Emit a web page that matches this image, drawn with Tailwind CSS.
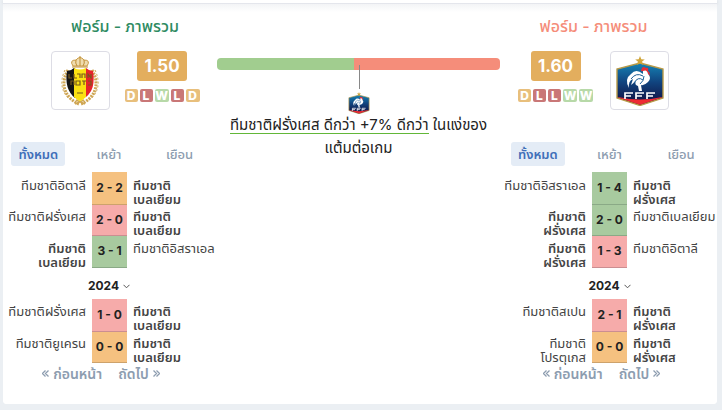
<!DOCTYPE html>
<html lang="th">
  <head>
    <meta charset="UTF-8" />
    <meta name="viewport" content="width=device-width, initial-scale=1.0" />
    <title>ฟอร์ม - ภาพรวม</title>
    <script src="https://cdn.jsdelivr.net/npm/@tailwindcss/browser@4"></script>
  </head>
  <body class="min-h-screen bg-[#ebeff3] pl-[3px] pr-[5px] pb-[6px] flex flex-col font-['Inter','Noto_Sans_Thai',sans-serif] text-[#222]">
    <!-- shared crest of the French team -->
    <svg class="absolute size-0" aria-hidden="true">
      <defs>
        <linearGradient id="blue" x1="0" y1="0" x2="0" y2="1">
          <stop offset="0" stop-color="#1583b5" />
          <stop offset="0.45" stop-color="#11447f" />
          <stop offset="0.85" stop-color="#101a4d" />
        </linearGradient>
        <symbol id="france" viewBox="0 0 48 50">
          <path d="M24 7 L47 13 V42 L24 49.5 L1 42 V13 Z" fill="url(#blue)" stroke="#b89a48" stroke-width="1.4" />
          <path d="M2 41 Q24 46 46 41 V41.5 L24 48.7 L2 41.5 Z" fill="#ee2b33" />
          <path d="M24 0 L25.3 3.2 L28.8 3.4 L26.1 5.6 L27 9 L24 7.1 L21 9 L21.9 5.6 L19.2 3.4 L22.7 3.2 Z" fill="#d0a53a" />
          <path d="M25 15 Q26 9 30 12 Q33 11 32 15 Q35 17 33 20 L31 16 Z" fill="#e62d36" />
          <path d="M27 15 Q31 13 32 18 Q36 22 32 26 Q28 30 25 29 L26 35 L23 35 L22 30 Q18 29 20 25 L15 29 L17 23 Q12 25 13 32 Q8 23 15 18 Q20 12 27 18 Z" fill="#fff" />
          <path d="M15 23 Q20 16 27 20 M18 27 Q22 20 27 24 M28 20 Q28 25 24 28" fill="none" stroke="#1b5d96" stroke-width="1" />
          <path d="M9 43 V37 H17 M9 40 H15 M20 43 V37 H28 M20 40 H26 M31 43 V37 H39 M31 40 H37" fill="none" stroke="#fff" stroke-width="1.7" />
        </symbol>
      </defs>
    </svg>

    <div class="h-[3px] bg-white shadow"></div>
    <main class="flex-1 rounded-b bg-white bg-linear-to-b from-[#f3f4f6] to-white to-[8px] border-t border-[#e4e6ec] pt-3 flex">
      <section class="w-[212px] shrink-0">
        <div class="pl-8">
          <h2 class="text-center text-base leading-5 font-medium text-[#2e8b62]">ฟอร์ม - ภาพรวม</h2>
          <div class="mt-[15px] flex justify-center gap-[15px]">
            <div class="size-[59px] shrink-0 rounded border border-[#dddde5] flex items-center justify-center">
              <svg class="w-10 h-[50px]" viewBox="0 0 40 50" aria-label="เบลเยียม">
                <g fill="none" stroke="#cfa654">
                  <path d="M8 14 Q-1 30 10 42 Q14 46 19 48 M32 14 Q41 30 30 42 Q26 46 21 48" stroke-width="3" stroke-dasharray="2 1" />
                  <path d="M5 14 Q-3 31 9 43 M35 14 Q43 31 31 43" stroke-width="1" stroke-dasharray="2 2" />
                  <path d="M15 48 L24 44 M25 48 L16 44" stroke-width="1.4" />
                </g>
                <path d="M13 10 Q9 4 16 4 Q20 -1 24 4 Q31 4 27 10 Z" fill="#efdcae" stroke="#c99a45" />
                <path d="M20 0 V10 M16 4 Q15 7 17 10 M24 4 Q25 7 23 10 M12 11 H28" stroke="#c08e35" fill="none" />
                <path d="M7 15 Q11 15 14 12 H15 V42 Q4 33 7 15" fill="#151515" />
                <path d="M14 12 Q20 15 26 12 V41 Q23 44 20 45 Q17 44 14 41 Z" fill="#fbe112" />
                <path d="M26 12 Q29 15 33 15 Q36 33 26 41 Z" fill="#e5232b" />
                <path d="M9 18 V22 H12 M14 18 V22 H17 M17 18 H20 V22 M22 22 V18 H25 V22 M28 22 V18 L31 22 V18 M11 29 V25 H14 V29 M16 25 H20 V29 H16 Z M22 25 H26 M24 25 V29 M28 29 H31 V25 H28 M17 37 H23" fill="none" stroke="#77591d" stroke-width="1.2" />
              </svg>
            </div>
            <div class="flex flex-col items-center">
              <span class="w-[50px] h-[30px] rounded-[3px] bg-[#e3ae5e] text-center text-[17px] leading-[30px] font-bold text-white">1.50</span>
              <div class="mt-2 flex gap-[2px] text-xs leading-[13px] font-extrabold text-white text-center">
                <span class="w-[13px] rounded-[2px] bg-[#e8bf7c]">D</span>
                <span class="w-[13px] rounded-[2px] bg-[#c97777]">L</span>
                <span class="w-[14px] rounded-[2px] bg-[#b7d9a8]">W</span>
                <span class="w-[13px] rounded-[2px] bg-[#c97777]">L</span>
                <span class="w-[14px] rounded-[2px] bg-[#e8bf7c]">D</span>
              </div>
            </div>
          </div>
        </div>

        <div class="mt-8 grid grid-cols-3 justify-items-center text-[13px] leading-6 font-medium text-[#8d9db0]">
          <button class="w-[54px] rounded-[3px] bg-[#e4ecf6] font-semibold text-[#3f6fb9]">ทั้งหมด</button>
          <button>เหย้า</button>
          <button>เยือน</button>
        </div>

        <table class="mt-[6px] w-full table-fixed text-[13px] leading-[14px] text-[#444]">
          <colgroup><col class="w-[89px]" /><col class="w-[35px]" /><col /></colgroup>
          <tbody>
            <tr>
              <td class="p-0 pr-[6px] align-top text-right whitespace-nowrap"><div class="h-8 pt-[6px]">ทีมชาติอิตาลี</div></td>
              <td class="p-0 border-b border-[#cda26b] bg-[#f5c180] text-center text-xs font-bold text-[#222]">2 - 2</td>
              <td class="p-0 pl-[6px] align-top font-semibold whitespace-nowrap"><div class="h-8 pt-[6px]">ทีมชาติ<br />เบลเยียม</div></td>
            </tr>
            <tr>
              <td class="p-0 pr-[6px] align-top text-right whitespace-nowrap"><div class="h-[31px] pt-[5px]">ทีมชาติฝรั่งเศส</div></td>
              <td class="p-0 border-b border-[#cb8e91] bg-[#f6abaa] text-center text-xs font-bold text-[#222]">2 - 0</td>
              <td class="p-0 pl-[6px] align-top font-semibold whitespace-nowrap"><div class="h-[31px] pt-[5px]">ทีมชาติ<br />เบลเยียม</div></td>
            </tr>
            <tr>
              <td class="p-0 pr-[6px] align-top text-right font-semibold whitespace-nowrap"><div class="h-8 pt-[6px]">ทีมชาติ<br />เบลเยียม</div></td>
              <td class="p-0 border-b border-[#8aa986] bg-[#a8ca9f] text-center text-xs font-bold text-[#222]">3 - 1</td>
              <td class="p-0 pl-[6px] align-top whitespace-nowrap"><div class="h-8 pt-[6px]">ทีมชาติอิสราเอล</div></td>
            </tr>
          </tbody>
          <tbody>
            <tr>
              <td colspan="3" class="h-8 p-0 pt-[5px] text-center">
                <button class="inline-flex items-center gap-1 text-xs leading-[14px] font-bold text-[#222]">2024
                  <svg class="w-[7px] h-[5px]" viewBox="0 0 7 5" fill="none" stroke="#555"><path d="M0.5 0.8 L3.5 3.8 L6.5 0.8" /></svg>
                </button>
              </td>
            </tr>
            <tr>
              <td class="p-0 pr-[6px] align-top text-right whitespace-nowrap"><div class="h-8 pt-[5px]">ทีมชาติฝรั่งเศส</div></td>
              <td class="p-0 border-b border-[#cb8e91] bg-[#f6abaa] text-center text-xs font-bold text-[#222]">1 - 0</td>
              <td class="p-0 pl-[6px] align-top font-semibold whitespace-nowrap"><div class="h-8 pt-[5px]">ทีมชาติ<br />เบลเยียม</div></td>
            </tr>
            <tr>
              <td class="p-0 pr-[6px] align-top text-right whitespace-nowrap"><div class="h-[31px] pt-[5px]">ทีมชาติยูเครน</div></td>
              <td class="p-0 border-b border-[#cda26b] bg-[#f5c180] text-center text-xs font-bold text-[#222]">0 - 0</td>
              <td class="p-0 pl-[6px] align-top font-semibold whitespace-nowrap"><div class="h-[31px] pt-[5px]">ทีมชาติ<br />เบลเยียม</div></td>
            </tr>
          </tbody>
        </table>
        <nav class="mt-px pr-4 flex justify-center gap-4 text-sm leading-5 font-semibold text-[#8d9db0]">
          <a href="#" class="flex items-center gap-1"><svg class="size-[7px]" viewBox="0 0 7 7" fill="none" stroke="currentColor" stroke-width="1.3"><path d="M3.5 0.5 L0.5 3.5 L3.5 6.5 M6.5 0.5 L3.5 3.5 L6.5 6.5" /></svg>ก่อนหน้า</a>
          <a href="#" class="flex items-center gap-1">ถัดไป<svg class="size-[7px]" viewBox="0 0 7 7" fill="none" stroke="currentColor" stroke-width="1.3"><path d="M0.5 0.5 L3.5 3.5 L0.5 6.5 M3.5 0.5 L6.5 3.5 L3.5 6.5" /></svg></a>
        </nav>
      </section>

      <section class="flex-1 pt-[42px] px-[2px] flex flex-col items-center">
        <div class="w-full h-3 rounded flex overflow-hidden">
          <div class="w-[137px] bg-[#a1cd8f]"></div>
          <div class="flex-1 bg-[#f58d7a]"></div>
        </div>
        <div class="relative -mt-[5px] ml-[2px] w-px h-6 bg-[#888]"></div>
        <svg class="mt-[3px] w-[22px] h-[22px]" aria-label="ฝรั่งเศส"><use href="#france" /></svg>
        <p class="-mt-px text-center text-[15px] leading-[23px] text-[#222]"><span class="inline-block h-[21px] border-b border-b-[#62b738]">ทีมชาติฝรั่งเศส ดีกว่า +7% ดีกว่า</span> ในแง่ของ<br />แต้มต่อเกม</p>
      </section>

      <section class="w-[215px] shrink-0">
        <div class="pr-8">
          <h2 class="text-center text-base leading-5 font-medium text-[#f58d7a]">ฟอร์ม - ภาพรวม</h2>
          <div class="mt-[15px] flex justify-center gap-[17px]">
            <div class="flex flex-col items-center">
              <span class="w-[50px] h-[30px] rounded-[3px] bg-[#e3ae5e] text-center text-[17px] leading-[30px] font-bold text-white">1.60</span>
              <div class="mt-2 flex gap-[2px] text-xs leading-[13px] font-extrabold text-white text-center">
                <span class="w-[13px] rounded-[2px] bg-[#e8bf7c]">D</span>
                <span class="w-[13px] rounded-[2px] bg-[#c97777]">L</span>
                <span class="w-[13px] rounded-[2px] bg-[#c97777]">L</span>
                <span class="w-[14px] rounded-[2px] bg-[#b7d9a8]">W</span>
                <span class="w-[14px] rounded-[2px] bg-[#b7d9a8]">W</span>
              </div>
            </div>
            <div class="size-[59px] shrink-0 rounded border border-[#dddde5] flex items-center justify-center">
              <svg class="w-12 h-[50px]" aria-label="ฝรั่งเศส"><use href="#france" /></svg>
            </div>
          </div>
        </div>

        <div class="mt-8 grid grid-cols-3 justify-items-center text-[13px] leading-6 font-medium text-[#8d9db0]">
          <button class="w-[54px] rounded-[3px] bg-[#e4ecf6] font-semibold text-[#3f6fb9]">ทั้งหมด</button>
          <button>เหย้า</button>
          <button>เยือน</button>
        </div>

        <table class="mt-[6px] w-full table-fixed text-[13px] leading-[14px] text-[#444]">
          <colgroup><col class="w-[90px]" /><col class="w-[35px]" /><col /></colgroup>
          <tbody>
            <tr>
              <td class="p-0 pr-[6px] align-top text-right whitespace-nowrap"><div class="h-8 pt-[6px]">ทีมชาติอิสราเอล</div></td>
              <td class="p-0 border-b border-[#8aa986] bg-[#a8ca9f] text-center text-xs font-bold text-[#222]">1 - 4</td>
              <td class="p-0 pl-[6px] align-top font-semibold whitespace-nowrap"><div class="h-8 pt-[6px]">ทีมชาติ<br />ฝรั่งเศส</div></td>
            </tr>
            <tr>
              <td class="p-0 pr-[6px] align-top text-right font-semibold whitespace-nowrap"><div class="h-[31px] pt-[5px]">ทีมชาติ<br />ฝรั่งเศส</div></td>
              <td class="p-0 border-b border-[#8aa986] bg-[#a8ca9f] text-center text-xs font-bold text-[#222]">2 - 0</td>
              <td class="p-0 pl-[6px] align-top whitespace-nowrap"><div class="h-[31px] pt-[5px]">ทีมชาติเบลเยียม</div></td>
            </tr>
            <tr>
              <td class="p-0 pr-[6px] align-top text-right font-semibold whitespace-nowrap"><div class="h-8 pt-[6px]">ทีมชาติ<br />ฝรั่งเศส</div></td>
              <td class="p-0 border-b border-[#cb8e91] bg-[#f6abaa] text-center text-xs font-bold text-[#222]">1 - 3</td>
              <td class="p-0 pl-[6px] align-top whitespace-nowrap"><div class="h-8 pt-[6px]">ทีมชาติอิตาลี</div></td>
            </tr>
          </tbody>
          <tbody>
            <tr>
              <td colspan="3" class="h-8 p-0 pt-[5px] text-center">
                <button class="inline-flex items-center gap-1 text-xs leading-[14px] font-bold text-[#222]">2024
                  <svg class="w-[7px] h-[5px]" viewBox="0 0 7 5" fill="none" stroke="#555"><path d="M0.5 0.8 L3.5 3.8 L6.5 0.8" /></svg>
                </button>
              </td>
            </tr>
            <tr>
              <td class="p-0 pr-[6px] align-top text-right whitespace-nowrap"><div class="h-8 pt-[5px]">ทีมชาติสเปน</div></td>
              <td class="p-0 border-b border-[#cb8e91] bg-[#f6abaa] text-center text-xs font-bold text-[#222]">2 - 1</td>
              <td class="p-0 pl-[6px] align-top font-semibold whitespace-nowrap"><div class="h-8 pt-[5px]">ทีมชาติ<br />ฝรั่งเศส</div></td>
            </tr>
            <tr>
              <td class="p-0 pr-[6px] align-top text-right whitespace-nowrap"><div class="h-[31px] pt-[5px]">ทีมชาติ<br />โปรตุเกส</div></td>
              <td class="p-0 border-b border-[#cda26b] bg-[#f5c180] text-center text-xs font-bold text-[#222]">0 - 0</td>
              <td class="p-0 pl-[6px] align-top font-semibold whitespace-nowrap"><div class="h-[31px] pt-[5px]">ทีมชาติ<br />ฝรั่งเศส</div></td>
            </tr>
          </tbody>
        </table>
        <nav class="mt-px pr-4 flex justify-center gap-4 text-sm leading-5 font-semibold text-[#8d9db0]">
          <a href="#" class="flex items-center gap-1"><svg class="size-[7px]" viewBox="0 0 7 7" fill="none" stroke="currentColor" stroke-width="1.3"><path d="M3.5 0.5 L0.5 3.5 L3.5 6.5 M6.5 0.5 L3.5 3.5 L6.5 6.5" /></svg>ก่อนหน้า</a>
          <a href="#" class="flex items-center gap-1">ถัดไป<svg class="size-[7px]" viewBox="0 0 7 7" fill="none" stroke="currentColor" stroke-width="1.3"><path d="M0.5 0.5 L3.5 3.5 L0.5 6.5 M3.5 0.5 L6.5 3.5 L3.5 6.5" /></svg></a>
        </nav>
      </section>
    </main>
  </body>
</html>
